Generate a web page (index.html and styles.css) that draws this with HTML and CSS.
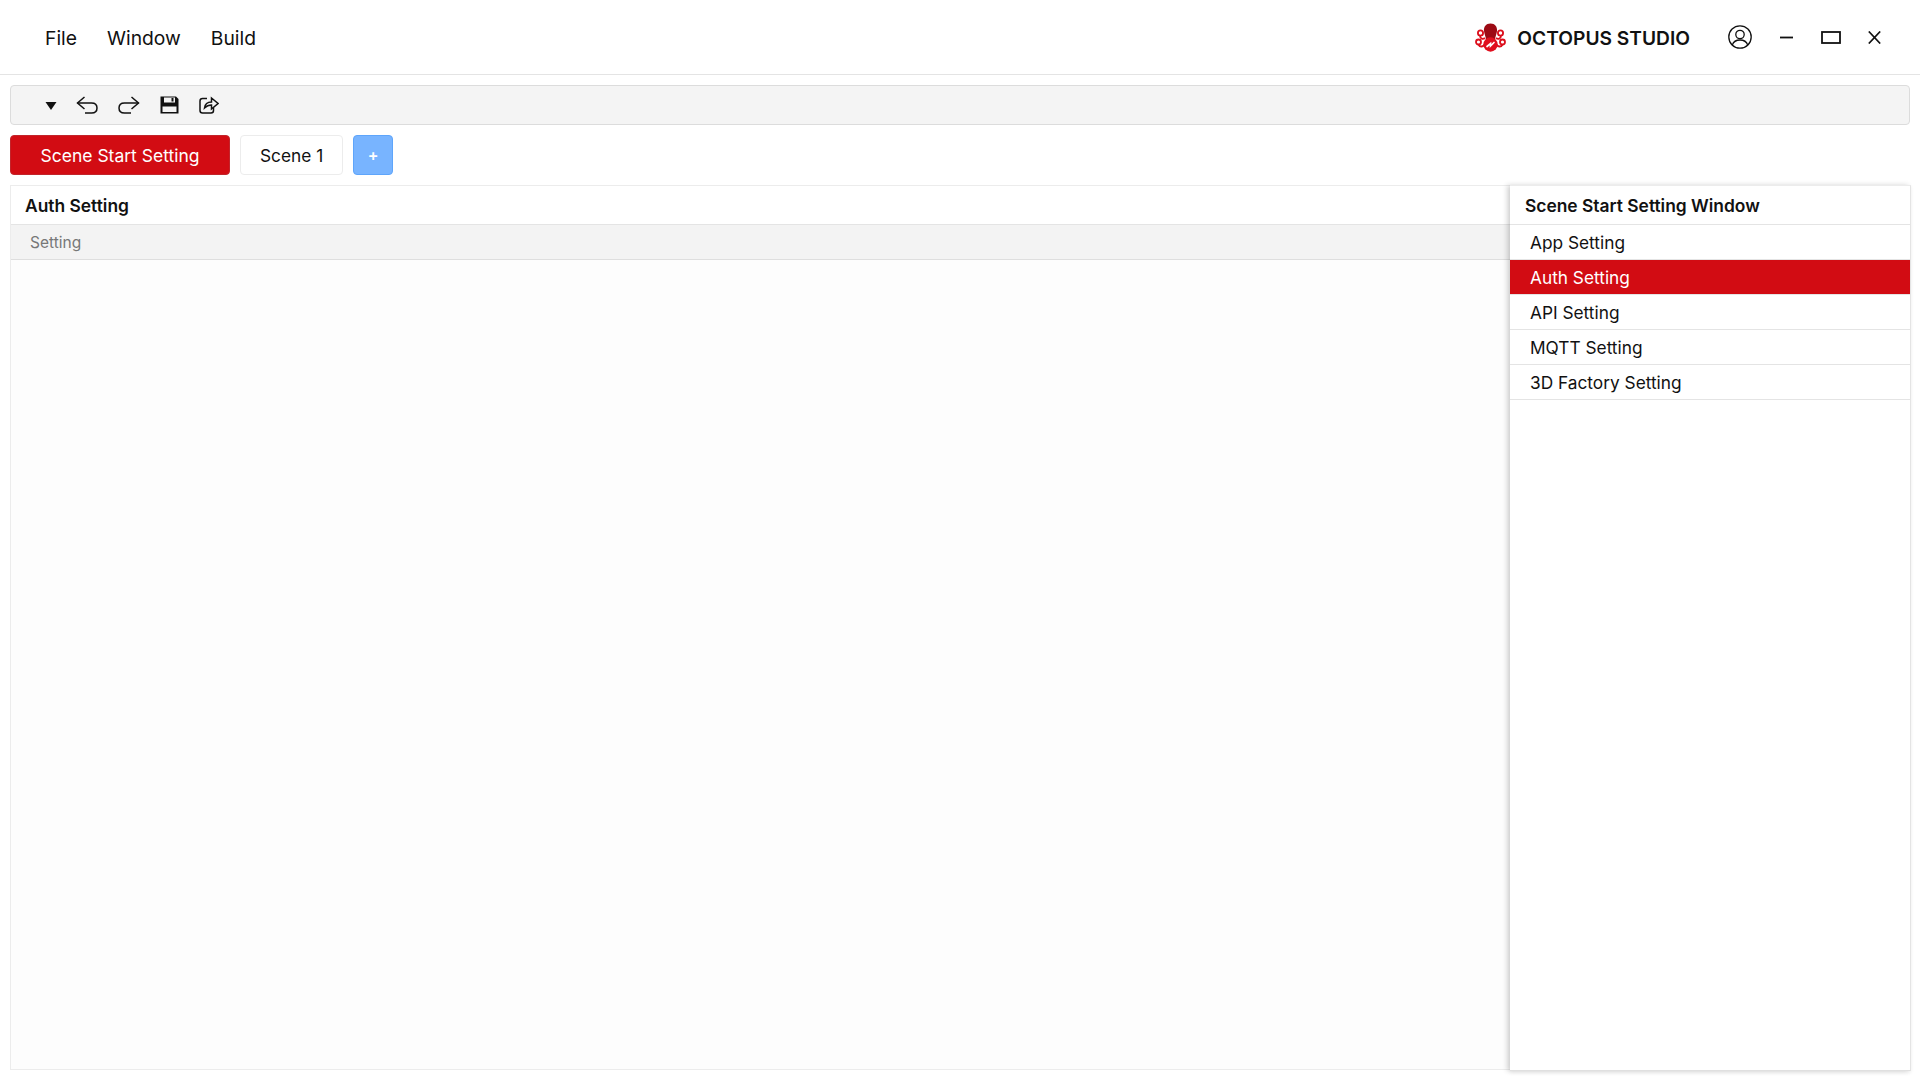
FILE: index.html
```html
<!DOCTYPE html>
<html lang="en">

<head>
  <meta charset="UTF-8">
  <title>Octopus Studio</title>
  <link rel="stylesheet" href="styles.css">
</head>

<body>
  <header class="topbar">
    <nav class="menu">
      <span class="menu__item">File</span>
      <span class="menu__item">Window</span>
      <span class="menu__item">Build</span>
    </nav>
    <div class="brand">
      <svg class="brand__logo" width="31" height="29" viewBox="0 0 31 29">
        <g fill="none" stroke="#dc0f1c" stroke-width="1.800">
          <circle cx="5.500" cy="10" r="2.600" />
          <circle cx="25.500" cy="10" r="2.600" />
          <circle cx="3.500" cy="19" r="2.500" />
          <circle cx="27.500" cy="19" r="2.500" />
          <path d="M5 12.500C5 16 8 16.500 10 15" />
          <path d="M26 12.500C26 16 23 16.500 21 15" />
          <path d="M3.500 21.500C5 24.500 8 24 10 21" />
          <path d="M27.500 21.500C26 24.500 23 24 21 21" />
        </g>
        <path d="M15.500 0.500C11 0.500 8.500 4 9 8C9.300 11 10.500 13 11 16H20C20.500 13 21.700 11 22 8C22.500 4 20 0.500 15.500 0.500Z" fill="#9c0a14" />
        <circle cx="15.500" cy="21.500" r="7.200" fill="#e00f1e" />
        <path d="M12 23.500L15.500 20.500V23L19 19.500" fill="none" stroke="#fff" stroke-width="1.700" stroke-linecap="round" />
      </svg>
      <span class="brand__name">OCTOPUS STUDIO</span>
    </div>
    <div class="window-btns">
      <svg width="24" height="24" viewBox="0 0 24 24" fill="none" stroke="#111" stroke-width="1.300">
        <circle cx="12" cy="12" r="11.200" />
        <circle cx="12" cy="9.500" r="4.200" />
        <path d="M4.300 20C5.500 16.500 8 15 12 15C16 15 18.500 16.500 19.700 20" />
      </svg>
      <svg width="13" height="13" viewBox="0 0 13 13"><path d="M0 6.500H13" stroke="#111" stroke-width="1.800" /></svg>
      <svg width="20" height="13" viewBox="0 0 20 13"><rect x="1" y="1" width="18" height="11" fill="none" stroke="#111" stroke-width="1.800" /></svg>
      <svg class="close-icon" width="13" height="13" viewBox="0 0 13 13"><path d="M0.800 0.500L12.200 12.500M12.200 0.500L0.800 12.500" stroke="#111" stroke-width="1.700" /></svg>
    </div>
  </header>

  <div class="toolbar">
    <svg class="toolbar__caret" width="12" height="8" viewBox="0 0 12 8"><path d="M0.500 0H11.500L6 8Z" fill="#111" /></svg>
    <svg width="22" height="18" viewBox="0 0 22 18" fill="none" stroke="#111" stroke-width="1.500">
      <path d="M8.500 1L1.500 7L8.500 13" />
      <path d="M1.500 7H15.500C19 7 21 9 21 12C21 15 19 17 15.500 17H9" />
    </svg>
    <svg width="22" height="18" viewBox="0 0 22 18" fill="none" stroke="#111" stroke-width="1.500">
      <path d="M13.500 1L20.500 7L13.500 13" />
      <path d="M20.500 7H6.500C3 7 1 9 1 12C1 15 3 17 6.500 17H13" />
    </svg>
    <svg width="19" height="18" viewBox="0 0 19 18">
      <path d="M0.500 0.500H16L18.500 3V17.500H0.500Z" fill="#111" />
      <rect x="4" y="1.500" width="11" height="5" fill="#f4f4f4" />
      <rect x="11.500" y="2" width="2" height="3.500" fill="#111" />
      <rect x="2.500" y="10.500" width="14" height="5.500" fill="#f4f4f4" />
    </svg>
    <svg width="20" height="18" viewBox="0 0 20 18" fill="none" stroke="#111" stroke-width="1.500">
      <path d="M8 2.500H3.500C2 2.500 1 3.500 1 5V14.500C1 16 2 17 3.500 17H12C13.500 17 14.500 16 14.500 14.500V11.500" />
      <path d="M5.500 12C6 8 8.500 6 12.500 6V2L19 7.500L12.500 13V9C9.500 9 7.500 10 5.500 12Z" />
    </svg>
  </div>

  <div class="tabs">
    <button class="tab tab--active">Scene Start Setting</button>
    <button class="tab">Scene 1</button>
    <button class="tab tab--add">+</button>
  </div>

  <main class="workspace">
    <section class="panel">
      <h2 class="panel__title">Auth Setting</h2>
      <div class="panel__sub">Setting</div>
      <div class="panel__body"></div>
    </section>
    <aside class="side">
      <h2 class="panel__title">Scene Start Setting Window</h2>
      <ul class="side__list">
        <li class="side__item">App Setting</li>
        <li class="side__item side__item--active">Auth Setting</li>
        <li class="side__item">API Setting</li>
        <li class="side__item">MQTT Setting</li>
        <li class="side__item">3D Factory Setting</li>
      </ul>
    </aside>
  </main>
</body>

</html>
```

FILE: styles.css
```css
html {
  box-sizing: border-box;
}

*,
*::before,
*::after {
  box-sizing: inherit;
}

body {
  margin: 0;
  height: 100vh;
  background-color: #fff;
  color: #111;
  font-family: Inter, "Liberation Sans", sans-serif;
  overflow: hidden;
}

h2,
ul {
  margin: 0;
  padding: 0;
  list-style: none;
}

.topbar {
  display: flex;
  align-items: center;
  height: 75px;
  padding: 0 39px 0 45px;
  border-bottom: 1px solid #e4e4e4;
}

.menu {
  display: flex;
  gap: 30px;
  padding-top: 1px;
  margin-right: auto;
  font-size: 19.300px;
}

.brand {
  display: flex;
  align-items: center;
  gap: 11px;
  margin-right: 38px;
}

.brand__name {
  padding-top: 1px;
  font-size: 19.200px;
  font-weight: 600;
}

.window-btns {
  display: flex;
  align-items: center;
  gap: 28px;
}

.close-icon {
  margin-left: -1px;
}

.toolbar {
  display: flex;
  align-items: center;
  gap: 20px;
  height: 40px;
  margin: 10px 10px 0;
  padding: 0 0 0 34px;
  background-color: #f4f4f4;
  border: 1px solid #dcdcdc;
  border-radius: 4px;
}

.toolbar__caret {
  margin-top: 1px;
  margin-right: -1px;
}

.tabs {
  display: flex;
  gap: 10px;
  margin: 10px 10px 0;
}

.tab {
  height: 40px;
  padding: 0 19px;
  background-color: #fff;
  border: 1px solid #ececec;
  border-radius: 4px;
  color: #111;
  font-family: inherit;
  font-size: 17.300px;
}

.tab--active {
  width: 220px;
  background-color: #d20c13;
  border-color: #c2252b;
  color: #fff;
  font-size: 17.500px;
}

.tab--add {
  width: 40px;
  padding: 0;
  background-color: #78b4ff;
  border-color: #5ea5fb;
  color: #fff;
  font-size: 16px;
  font-weight: 600;
}

.workspace {
  display: flex;
  height: 886px;
  margin: 10px 9px 0 10px;
}

.panel {
  display: flex;
  flex-direction: column;
  flex: 1;
  height: 885px;
  border: 1px solid #ececec;
  border-right: 0;
}

.panel__title {
  height: 39px;
  padding-left: 14px;
  border-bottom: 1px solid #e4e4e4;
  font-size: 17.400px;
  font-weight: 600;
  line-height: 40px;
}

.panel__sub {
  height: 35px;
  padding-left: 19px;
  background-color: #f3f3f3;
  border-bottom: 1px solid #dedede;
  color: #777;
  font-size: 15.500px;
  line-height: 36px;
}

.panel__body {
  flex: 1;
  background-color: #fdfdfd;
}

.side {
  width: 401px;
  background-color: #fff;
  border-right: 1px solid #e4e4e4;
  border-bottom: 1px solid #e0e0e0;
  border-top: 1px solid #ececec;
  box-shadow: -3px 0 5px rgba(0, 0, 0, 0.16), 0 2px 4px rgba(0, 0, 0, 0.05);
}

.side .panel__title {
  padding-left: 15px;
}

.side__item {
  height: 35px;
  padding-left: 20px;
  border-bottom: 1px solid #e4e4e4;
  font-size: 17.300px;
  line-height: 36px;
}

.side__item--active {
  background-color: #d20c13;
  color: #fff;
}
```
